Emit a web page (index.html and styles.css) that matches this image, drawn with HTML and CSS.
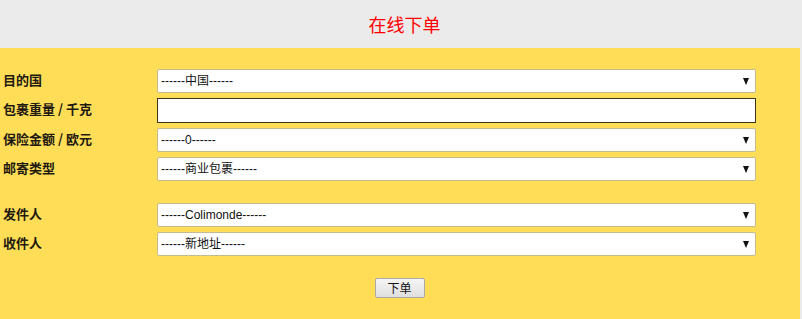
FILE: index.html
```html
<!DOCTYPE html>
<html lang="zh">
<head>
<meta charset="utf-8">
<title>在线下单</title>
<link rel="stylesheet" href="styles.css">
</head>
<body>
<div class="page">
  <header class="head"><h1 class="title">在线下单</h1></header>
  <section class="panel">
    <form class="form">
      <div class="group">
        <div class="row">
          <label class="label">目的国</label>
          <span class="sel"><select class="field"><option>------中国------</option></select></span>
        </div>
        <div class="row">
          <label class="label">包裹重量 / 千克</label>
          <input class="input" type="text">
        </div>
        <div class="row">
          <label class="label">保险金额 / 欧元</label>
          <span class="sel"><select class="field"><option>------0------</option></select></span>
        </div>
        <div class="row">
          <label class="label">邮寄类型</label>
          <span class="sel"><select class="field"><option>------商业包裹------</option></select></span>
        </div>
      </div>
      <div class="group group-2">
        <div class="row">
          <label class="label">发件人</label>
          <span class="sel"><select class="field"><option>------Colimonde------</option></select></span>
        </div>
        <div class="row">
          <label class="label">收件人</label>
          <span class="sel"><select class="field"><option>------新地址------</option></select></span>
        </div>
      </div>
      <div class="actions"><button class="btn" type="button">下单</button></div>
    </form>
  </section>
</div>
</body>
</html>
```
FILE: styles.css
```css
html, body {
  margin: 0;
  padding: 0;
  background: #ebebeb;
}
body {
  font-family: "Liberation Sans", "Noto Sans CJK SC", Arial, sans-serif;
  width: 802px;
  height: 319px;
  overflow: hidden;
}
.page {
  width: 800px;
}
.head {
  height: 48px;
  background: #ebebeb;
  display: flex;
  align-items: center;
  justify-content: center;
  padding-left: 9px;
  box-sizing: border-box;
}
.title {
  margin: 0;
  font-family: "Noto Sans CJK SC", sans-serif;
  font-weight: normal;
  font-size: 18px;
  line-height: 18px;
  color: #ff0000;
  letter-spacing: 0;
}
.panel {
  background: #ffdd57;
  height: 271px;
  padding-top: 21px;
  box-sizing: border-box;
}
.form {
  display: flex;
  flex-direction: column;
}
.group {
  display: flex;
  flex-direction: column;
  gap: 5px;
}
.group-2 {
  margin-top: 22px;
}
.row {
  display: grid;
  grid-template-columns: 157px 599px;
  align-items: center;
}
.label {
  padding-left: 3px;
  padding-bottom: 3px;
  font-family: "Noto Sans CJK SC", sans-serif;
  font-weight: bold;
  font-size: 13px;
  line-height: 16px;
  color: #1e1a10;
  white-space: nowrap;
}
.sel {
  position: relative;
  display: block;
  height: 24px;
}
.sel::after {
  content: "";
  position: absolute;
  right: 7px;
  top: 9px;
  border-left: 3.5px solid transparent;
  border-right: 3.5px solid transparent;
  border-top: 7px solid #111;
}
.field {
  appearance: none;
  -webkit-appearance: none;
  width: 599px;
  height: 24px;
  margin: 0;
  padding: 0 0 0 3px;
  border: 1px solid #c4b98f;
  border-radius: 2px;
  background: #ffffff;
  font-family: "Liberation Sans", "Noto Sans CJK SC", Arial, sans-serif;
  font-size: 12px;
  color: #111;
  box-sizing: border-box;
}
.input {
  width: 599px;
  height: 25px;
  margin: 0;
  padding: 0 3px;
  border: 1px solid #3d3418;
  border-radius: 0;
  background: #fff;
  box-sizing: border-box;
  font-size: 12px;
}
.actions {
  display: flex;
  justify-content: center;
  margin-top: 22px;
}
.btn {
  width: 50px;
  height: 20px;
  margin-left: -1px;
  padding: 0;
  border: 1px solid #a9a9a9;
  border-radius: 2px;
  background: linear-gradient(#f6f6f6, #dedede);
  font-family: "Noto Sans CJK SC", sans-serif;
  font-size: 12px;
  color: #111;
  line-height: 18px;
}
```
